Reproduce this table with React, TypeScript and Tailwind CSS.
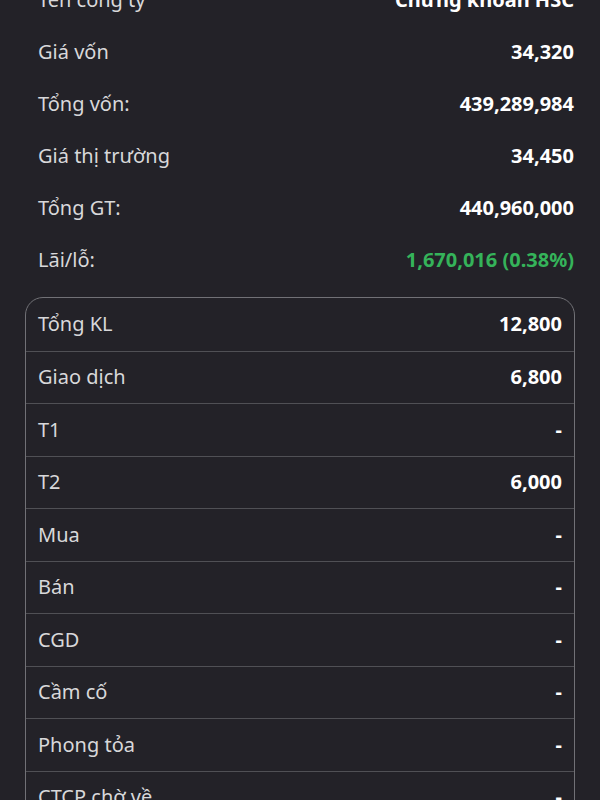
import React from "react";

const top = [
  ["Tên công ty", "Chứng khoán HSC", false],
  ["Giá vốn", "34,320", false],
  ["Tổng vốn:", "439,289,984", false],
  ["Giá thị trường", "34,450", false],
  ["Tổng GT:", "440,960,000", false],
  ["Lãi/lỗ:", "1,670,016 (0.38%)", true],
] as const;

const table = [
  ["Tổng KL", "12,800"],
  ["Giao dịch", "6,800"],
  ["T1", "-"],
  ["T2", "6,000"],
  ["Mua", "-"],
  ["Bán", "-"],
  ["CGD", "-"],
  ["Cầm cố", "-"],
  ["Phong tỏa", "-"],
  ["CTCP chờ về", "-"],
  ["Quyền chờ về", "-"],
];

export default function App() {
  return (
    <div
      className="w-[600px] h-[800px] overflow-hidden bg-[#232228] text-[20px]"
      style={{ fontFamily: '"Noto Sans", sans-serif' }}
    >
      <div className="-mt-[26px] pl-[38px] pr-[26px]">
        {top.map(([l, v, g]) => (
          <div key={l} className="h-[52px] flex items-center justify-between">
            <span className="text-[#d8d8da]">{l}</span>
            <span className={g ? "font-bold text-[#35b35a]" : "font-bold text-white"}>{v}</span>
          </div>
        ))}
      </div>
      <div className="mx-[25px] mt-[11px] border-[1.5px] border-[#717176] rounded-[18px] overflow-hidden">
        {table.map(([l, v], i) => (
          <div
            key={l}
            className={
              "h-[52.5px] flex items-center justify-between pl-[12px] pr-[12px] " +
              (i > 0 ? "border-t-[1.5px] border-[#505055]" : "")
            }
          >
            <span className="text-[#d8d8da]">{l}</span>
            <span className="font-bold text-white">{v}</span>
          </div>
        ))}
      </div>
    </div>
  );
}
